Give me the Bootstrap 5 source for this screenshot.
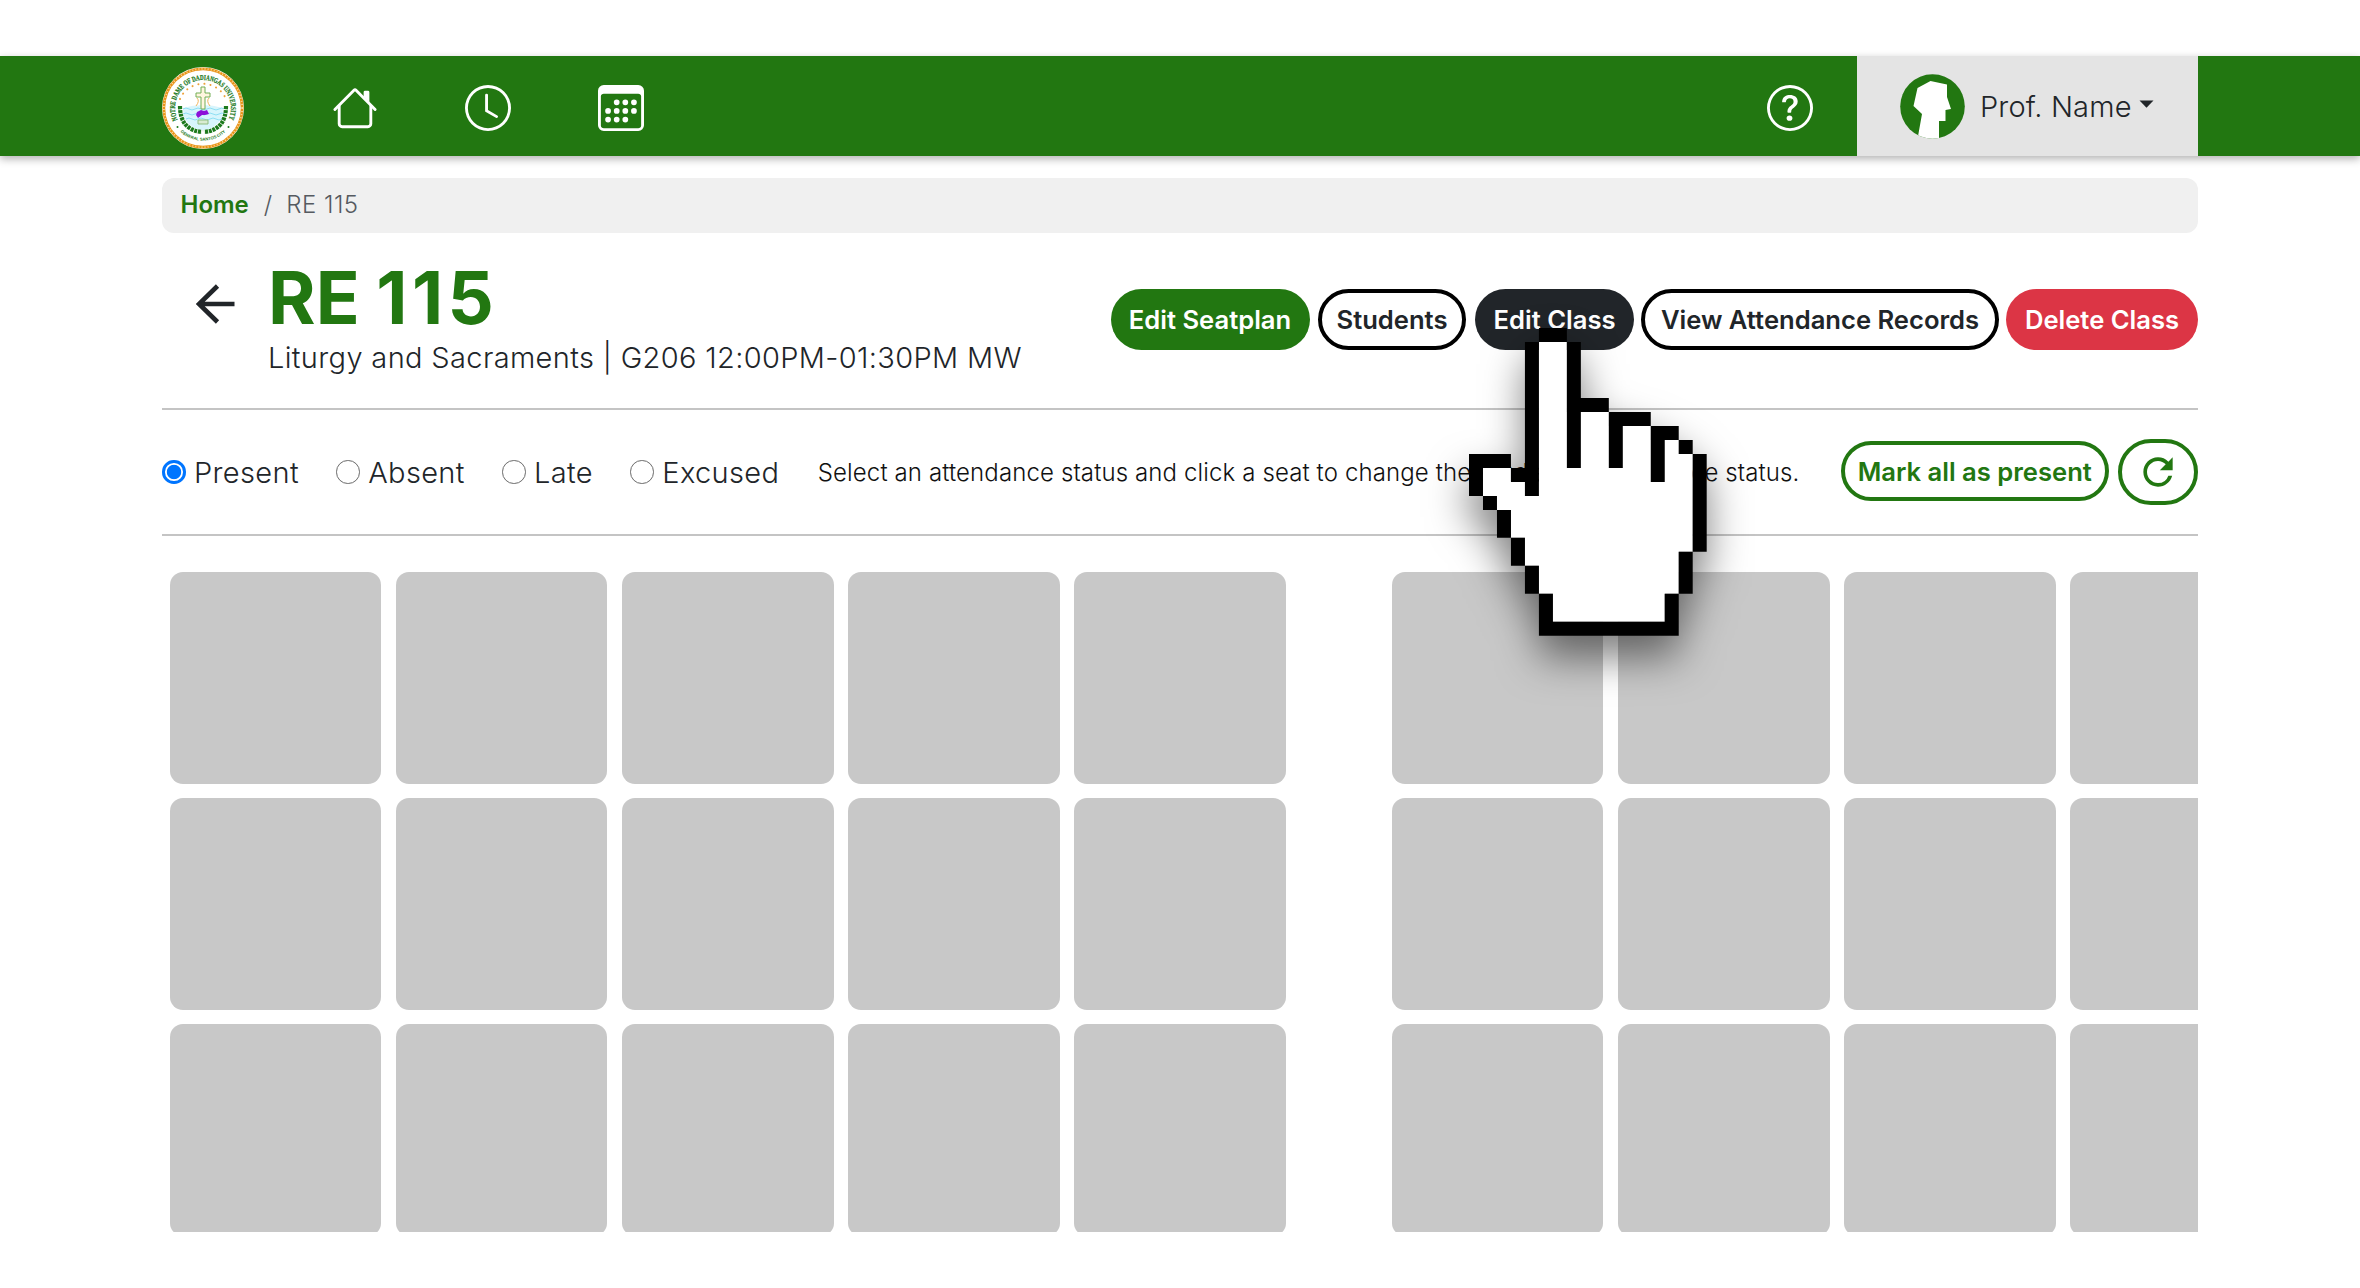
<!DOCTYPE html>
<html lang="en">
<head>
<meta charset="utf-8">
<title>RE 115</title>
<link href="https://cdn.jsdelivr.net/npm/bootstrap@5.3.0/dist/css/bootstrap.min.css" rel="stylesheet">
<style>
body{font-family:Inter,"Open Sans",sans-serif;background:#fff;color:#212529;padding-top:56px;height:1288px;overflow:hidden}
.page-width{width:2036px;margin:0 auto}
.topbar{height:100px;background:#227711;box-shadow:0 3px 8px rgba(0,0,0,.3)}
.crest{width:82px;height:82px;margin-top:4px}
.nav-icons{gap:87px;margin-left:88px;margin-top:4px}
.bi{fill:currentColor;display:block}
.profile{width:341px;height:100px;background:#e4e4e4;margin-left:44px;padding-left:43px}
.profile-name{font-size:29px;font-weight:300;line-height:1;margin-left:15px;letter-spacing:.15px}
.profile .caret{width:15px;height:8px;margin:-4px 0 0 7px}
.trail{height:55px;margin-top:22px;background:#f0f0f0;border-radius:12px;padding:0 0 2px 18.5px;font-size:24px;font-weight:300;color:#555a60}
.trail a{color:#227711;font-weight:600;text-decoration:none}
.trail .sep{margin:0 14px 0 15px}
.trail .here{letter-spacing:.5px}
.class-head{height:175px;padding-left:34px}
.back{margin-top:51px;width:39px;height:40px}
.class-name{margin-left:33px}
.class-title{font-size:72.4px;font-weight:700;color:#227711;line-height:80px;margin:25px 0 0;letter-spacing:.2px;word-spacing:-1px}
.class-number{letter-spacing:4.4px}
.class-sub{font-size:29px;font-weight:300;line-height:40px;margin:0;letter-spacing:.35px}
.actions{margin-top:56px}
.pill{height:60.5px;border-radius:31px;font-size:25.6px;font-weight:600;padding:2px 0 0;border:4px solid transparent;line-height:1}
.pill-green{background:#227711;color:#fff}
.pill-line{border-color:#000;color:#212529;background:#fff}
.pill-line-green{border-color:#227711;color:#227711;background:#fff}
.w-plan{width:199px;margin-right:8.5px}
.w-students{width:148px;margin-right:9px}
.w-edit{width:159px;margin-right:7px}
.w-records{width:358px;margin-right:7px}
.w-delete{width:192px}
.w-mark{width:268.5px;margin:-2px 9px 0 auto}
.w-refresh{width:80px;height:66px;border-radius:33px;padding:0}
.rule{height:2px;background:#c4c4c4}
.status-bar{height:124px}
.status-bar input{appearance:none;width:23.5px;height:23.5px;margin:0;border:1.800px solid #6a6a6a;border-radius:50%;background:#fff;flex:none}
.status-bar input:checked{border:3px solid #0075ff;background:radial-gradient(circle,#0075ff 6.800px,#fff 7.600px)}
.choice{gap:8.5px}
.choice+.choice{margin-left:37.3px}
.status-bar label{font-size:29px;font-weight:300;line-height:1;letter-spacing:.35px}
.hint{font-size:24px;font-weight:300;color:#111;letter-spacing:.12px;white-space:nowrap;margin:1px 0 0 38.5px}
.hint-who{letter-spacing:.62px}
.seats{height:660px;overflow:hidden;margin-top:36px;padding-left:7.700px;gap:14.7px}
.seat-row{gap:14.7px;flex:none}
.seat{width:211.5px;height:211.5px;border-radius:13px;background:#c8c8c8;flex:none}
.aisle{width:76.5px;flex:none}
.pointer{position:absolute;left:1469.3px;top:327.5px;width:237.7px;height:307.8px;overflow:visible;filter:drop-shadow(0 22px 20px rgba(0,0,0,.5))}
</style>
<script src="https://cdn.jsdelivr.net/npm/bootstrap@5.3.0/dist/js/bootstrap.bundle.min.js"></script>
</head>
<body>
<nav class="topbar">
 <div class="page-width d-flex align-items-center h-100">
  <svg class="crest" viewBox="0 0 82 82">
   <circle cx="41" cy="41" r="41" fill="#fff"/>
   <circle cx="41" cy="41" r="39.2" fill="none" stroke="#e8941a" stroke-width="2.800"/>
   <circle cx="41" cy="41" r="39.2" fill="none" stroke="#fbd79a" stroke-width="1.800" stroke-dasharray="1 2.100"/>
   <path d="M18 32A25 25 0 0 1 64 32" fill="none" stroke="#eda23a" stroke-width="2" stroke-dasharray=".1 6" stroke-linecap="round"/>
   <path d="M21 41q20-6 40 0l-1 10q-8 12-19 12T22 51z" fill="#d8f5fc"/>
   <path d="M21 42q3-2 6 0t6 0 6 0 6 0 6 0 6 0 5 0M21 47q3-2 6 0t6 0 6 0 6 0 6 0 6 0 6 0M24 52q3-2 6 0t6 0 6 0 6 0 6 0 6 0" fill="none" stroke="#8edff3"/>
   <path d="M39 20h4v6h5v4h-5v12h-4V30h-5v-4h5z" fill="#fff6df" stroke="#73ad55"/>
   <path d="M35 31q3 3-1 8M47 31q-3 3 1 8" fill="none" stroke="#f1b45a"/>
   <path d="M35 45l4-2 3 1 3-1 2 4-4 1h-3l-4 3-2-3z" fill="#8d10d8"/>
   <path d="M36 53h10v4H36z" fill="#d9ecd2" stroke="#8fbd80"/>
   <path d="M18 39q0 24 22 26M64 39q0 24-22 26" fill="none" stroke="#1d7a1d" stroke-width="4.200" stroke-dasharray="3 .8"/>
   <path id="arcTop" d="M15.600 52.800A28 28 0 1 1 66.400 52.800" fill="none"/>
   <path id="arcBottom" d="M14 60A33.500 33.500 0 0 0 68 60" fill="none"/>
   <text font-family="Liberation Serif" font-size="7.400" font-weight="700" fill="#1d7a1d" stroke="#1d7a1d" stroke-width=".25" textLength="111" lengthAdjust="spacingAndGlyphs"><textPath href="#arcTop" textLength="111" lengthAdjust="spacingAndGlyphs">NOTRE DAME OF DADIANGAS UNIVERSITY</textPath></text>
   <text font-family="Liberation Sans" font-size="4.200" font-weight="700" fill="#1d7a1d"><textPath href="#arcBottom" startOffset="50%" text-anchor="middle">GENERAL SANTOS CITY</textPath></text>
   <circle cx="15.500" cy="60" r="1" fill="#1d7a1d"/><circle cx="66.500" cy="60" r="1" fill="#1d7a1d"/>
  </svg>
  <div class="nav-icons d-flex text-white">
   <svg class="bi" width="46" height="46" viewBox="0 0 16 16"><path d="M2 13.500V7h1v6.500a.5.5 0 0 0 .5.5h9a.5.5 0 0 0 .5-.5V7h1v6.500a1.500 1.500 0 0 1-1.500 1.500h-9A1.500 1.500 0 0 1 2 13.500zm11-11V6l-2-2V2.500a.5.5 0 0 1 .5-.5h1a.5.5 0 0 1 .5.5z"/><path d="M7.293 1.500a1 1 0 0 1 1.414 0l6.647 6.646a.5.5 0 0 1-.708.708L8 2.207 1.354 8.854a.5.5 0 1 1-.708-.708L7.293 1.500z"/></svg>
   <svg class="bi" width="46" height="46" viewBox="0 0 16 16"><path d="M8 3.500a.5.5 0 0 0-1 0V9a.5.5 0 0 0 .252.434l3.500 2a.5.5 0 0 0 .496-.868L8 8.710V3.500z"/><path d="M8 16A8 8 0 1 0 8 0a8 8 0 0 0 0 16zm7-8A7 7 0 1 1 1 8a7 7 0 0 1 14 0z"/></svg>
   <svg class="bi" width="46" height="46" viewBox="0 0 16 16"><path d="M14 0H2a2 2 0 0 0-2 2v12a2 2 0 0 0 2 2h12a2 2 0 0 0 2-2V2a2 2 0 0 0-2-2zM1 3.857C1 3.384 1.448 3 2 3h12c.552 0 1 .384 1 .857v10.286c0 .473-.448.857-1 .857H2c-.552 0-1-.384-1-.857V3.857z"/><path d="M6.500 7a1 1 0 1 0 0-2 1 1 0 0 0 0 2zm3 0a1 1 0 1 0 0-2 1 1 0 0 0 0 2zm3 0a1 1 0 1 0 0-2 1 1 0 0 0 0 2zm-9 3a1 1 0 1 0 0-2 1 1 0 0 0 0 2zm3 0a1 1 0 1 0 0-2 1 1 0 0 0 0 2zm3 0a1 1 0 1 0 0-2 1 1 0 0 0 0 2zm3 0a1 1 0 1 0 0-2 1 1 0 0 0 0 2zm-9 3a1 1 0 1 0 0-2 1 1 0 0 0 0 2zm3 0a1 1 0 1 0 0-2 1 1 0 0 0 0 2zm3 0a1 1 0 1 0 0-2 1 1 0 0 0 0 2z"/></svg>
  </div>
  <svg class="bi text-white ms-auto mt-1" width="46" height="46" viewBox="0 0 16 16"><path d="M8 15A7 7 0 1 1 8 1a7 7 0 0 1 0 14zm0 1A8 8 0 1 0 8 0a8 8 0 0 0 0 16z"/><path d="M5.255 5.786a.237.237 0 0 0 .241.247h.825c.138 0 .248-.113.266-.25.090-.656.540-1.134 1.342-1.134.686 0 1.314.343 1.314 1.168 0 .635-.374.927-.965 1.371-.673.489-1.206 1.060-1.168 1.987l.003.217a.25.25 0 0 0 .25.246h.811a.25.25 0 0 0 .25-.25v-.105c0-.718.273-.927 1.010-1.486.609-.463 1.244-.977 1.244-2.056 0-1.511-1.276-2.241-2.673-2.241-1.267 0-2.655.590-2.750 2.286zm1.557 5.763c0 .533.425.927 1.010.927.609 0 1.028-.394 1.028-.927 0-.552-.420-.940-1.029-.940-.584 0-1.009.388-1.009.940z"/></svg>
  <div class="profile d-flex align-items-center">
   <svg width="65" height="65" viewBox="0 0 65 65"><clipPath id="face"><circle cx="32.500" cy="32.500" r="32.300"/></clipPath><g clip-path="url(#face)"><path fill="#227711" d="M0 0h65v65H0z"/><path fill="#fff" d="M17.500 14 30.500 7 47 10.500V23l4 12-5.500 1v11H39v18H17.500L22 40l-8.500-8z"/></g></svg>
   <span class="profile-name">Prof. Name</span>
   <svg class="caret" viewBox="0 0 15 8"><path d="M.5.500h14L7.500 7.800z" fill="#212529"/></svg>
  </div>
 </div>
</nav>
<main class="page-width">
 <div class="trail d-flex align-items-center"><a href="#">Home</a><span class="sep">/</span><span class="here">RE 115</span></div>
 <header class="class-head d-flex">
  <svg class="back" viewBox="0 0 39 40"><path d="M38.500 20H4M21.500 2 3 20l18.500 18" fill="none" stroke="#212529" stroke-width="4.600"/></svg>
  <div class="class-name"><h1 class="class-title">RE <span class="class-number">115</span></h1><p class="class-sub">Liturgy and Sacraments | G206 12:00PM-01:30PM MW</p></div>
  <div class="actions d-flex ms-auto">
   <button class="btn pill pill-green w-plan">Edit Seatplan</button>
   <button class="btn pill pill-line w-students">Students</button>
   <button class="btn btn-dark pill w-edit">Edit Class</button>
   <button class="btn pill pill-line w-records">View Attendance Records</button>
   <button class="btn btn-danger pill w-delete">Delete Class</button>
  </div>
 </header>
 <div class="rule"></div>
 <div class="status-bar d-flex align-items-center">
  <div class="choice d-flex align-items-center"><input type="radio" name="status" id="present" checked><label for="present">Present</label></div>
  <div class="choice d-flex align-items-center"><input type="radio" name="status" id="absent"><label for="absent">Absent</label></div>
  <div class="choice d-flex align-items-center"><input type="radio" name="status" id="late"><label for="late">Late</label></div>
  <div class="choice d-flex align-items-center"><input type="radio" name="status" id="excused"><label for="excused">Excused</label></div>
  <span class="hint">Select an attendance status and click a seat to change the <span class="hint-who">student's</span> attendance status.</span>
  <button class="btn pill pill-line-green w-mark">Mark all as present</button>
  <button class="btn pill pill-line-green w-refresh d-flex align-items-center justify-content-center"><svg class="bi" width="44" height="44" viewBox="0 0 24 24"><path d="M17.650 6.350A7.958 7.958 0 0 0 12 4c-4.420 0-7.990 3.580-7.990 8s3.570 8 7.990 8c3.730 0 6.840-2.550 7.730-6h-2.080A5.990 5.990 0 0 1 12 18c-3.310 0-6-2.690-6-6s2.690-6 6-6c1.660 0 3.140.690 4.220 1.780L13 11h7V4z"/></svg></button>
 </div>
 <div class="rule"></div>
 <section class="seats d-flex flex-column">
  <div class="seat-row d-flex"><div class="seat"></div><div class="seat"></div><div class="seat"></div><div class="seat"></div><div class="seat"></div><div class="aisle"></div><div class="seat"></div><div class="seat"></div><div class="seat"></div><div class="seat"></div></div>
  <div class="seat-row d-flex"><div class="seat"></div><div class="seat"></div><div class="seat"></div><div class="seat"></div><div class="seat"></div><div class="aisle"></div><div class="seat"></div><div class="seat"></div><div class="seat"></div><div class="seat"></div></div>
  <div class="seat-row d-flex"><div class="seat"></div><div class="seat"></div><div class="seat"></div><div class="seat"></div><div class="seat"></div><div class="aisle"></div><div class="seat"></div><div class="seat"></div><div class="seat"></div><div class="seat"></div></div>
 </section>
</main>
<svg class="pointer" viewBox="0 0 17 22" preserveAspectRatio="none">
 <path fill="#fff" d="M5 1h2v5h3v1h3v1h2v1h1v7h-1v3h-1v2H6v-2H5v-2H4v-2H3v-2H2v-1H1v-2h2v1h2z"/>
 <path d="M5 0h2v1H5zM4 1h1v11H4v-1H3v-1h1zM7 1h1v4h2v1H8v4H7zM10 6h3v1h-2v3h-1zM13 7h2v1h-1v3h-1zM15 8h1v1h-1zM16 9h1v7h-1zM15 16h1v3h-1zM14 19h1v3H5v-3h1v2h8zM4 17h1v2H4zM3 15h1v2H3zM2 13h1v2H2zM1 12h1v1H1zM0 9h3v1H1v2H0z"/>
</svg>
</body>
</html>
